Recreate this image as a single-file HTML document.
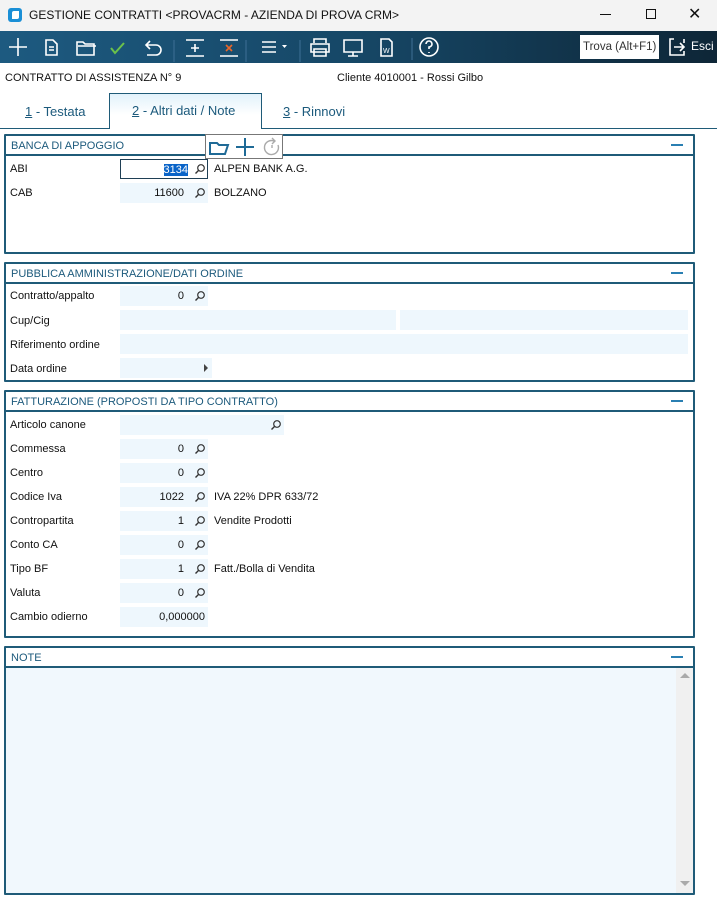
<!DOCTYPE html>
<html><head><meta charset="utf-8"><style>
*{box-sizing:border-box;margin:0;padding:0}
body{width:717px;height:900px;background:#fff;font-family:"Liberation Sans",sans-serif;font-size:11.5px;color:#111;position:relative;overflow:hidden}
.a{position:absolute}
.tb{left:0;top:31px;width:717px;height:32px;background:linear-gradient(90deg,#1d5a80 0%,#164766 50%,#0e2637 100%)}
.panel{position:absolute;left:4px;width:691px;border:2px solid #1f5b78;border-radius:1px}
.ph{height:20px;border-bottom:2px solid #1f5b78;color:#1c5a7c;font-size:11px;padding:4px 0 0 5px}
.min{position:absolute;right:10px;top:8px;width:12px;height:2px;background:#2a7fb2}
.lab{position:absolute;left:10px;font-size:11px}
.f{position:absolute;height:20px;background:#eef7fd;text-align:right;font-size:11px;line-height:20px;padding-right:24px}
.s{position:absolute;right:4px;top:4px}
.d{position:absolute;font-size:11px}
</style></head><body>
<div class="a" style="left:0;top:0;width:717px;height:31px;background:#f3f3f3"></div>
<div class="a" style="left:8px;top:8px;width:14px;height:14px;background:#1a8fd6;border-radius:3px"><div style="position:absolute;left:4px;top:3px;width:7px;height:8px;background:#fff;border-radius:2px 0 2px 0"></div></div>
<div class="a" style="left:29px;top:8px;font-size:12px">GESTIONE CONTRATTI &lt;PROVACRM - AZIENDA DI PROVA CRM&gt;</div>
<div class="a" style="left:600px;top:14px;width:11px;height:1px;background:#111"></div>
<div class="a" style="left:646px;top:9px;width:10px;height:10px;border:1px solid #111"></div>
<div class="a" style="left:688px;top:4px;font-size:16px">✕</div>
<div class="a tb"></div>
<svg class="a" style="left:0;top:31px" width="450" height="32" fill="none" stroke="#fff" stroke-width="1.6">
<path d="M18 7v18M9 16h18"/>
<path d="M46 9h7l4 4v11h-11z M49 16h5M49 19h5"/>
<path d="M77 11h6l2 2h9v11h-17z M78 15h18"/>
<path d="M111 17l4 5 9-10" stroke="#6cc24a" stroke-width="2"/>
<path d="M150 10l-4 4 4 4M146 14h10a5 5 0 0 1 0 10h-9"/>
<path d="M174 9v22M300 9v22M246 9v22" stroke="#3e7096" stroke-width="1"/>
<path d="M186 9h18M186 25h18M195 13v8M191 17h8"/>
<path d="M220 9h18M220 25h18" /><path d="M226 14l6 6M232 14l-6 6" stroke="#e8672a"/>
<path d="M262 11h14M262 16h14M262 21h14"/><path d="M282 14h5l-2.5 3z" fill="#fff" stroke="none"/>
<path d="M314 12v-4h12v4M311 13h18v8h-18zM314 18h12v7h-12z"/>
<path d="M344 9h18v12h-18zM353 21v4M348 25h10"/>
<path d="M381 8h8l3 3v14h-11z"/><text x="383" y="22" font-size="7" fill="#fff" stroke="none" font-family="Liberation Sans">W</text>
<path d="M412 7v22" stroke="#3e7096" stroke-width="1"/>
<circle cx="429" cy="16" r="9"/><path d="M426 13a3 3 0 1 1 3 3v2M429 21v1"/>
</svg>
<div class="a" style="left:580px;top:35px;width:79px;height:24px;background:#fff;font-size:11.5px;line-height:24px;padding-left:3px;color:#333">Trova (Alt+F1)</div>
<svg class="a" style="left:667px;top:36px" width="22" height="22" fill="none" stroke="#fff" stroke-width="1.6"><path d="M7 3h-4v16h14v-4M7 11h10M13 7l4 4-4 4M17 3v4"/></svg>
<div class="a" style="left:691px;top:39px;color:#fff;font-size:12px">Esci</div>
<div class="a" style="left:5px;top:72px;font-size:11px">CONTRATTO DI ASSISTENZA N° 9</div>
<div class="a" style="left:337px;top:72px;font-size:11px">Cliente 4010001 - Rossi Gilbo</div>
<div class="a" style="left:0;top:128px;width:717px;height:1px;background:#1f5b78"></div>
<div class="a" style="left:109px;top:93px;width:153px;height:36px;border:1px solid #1f5b78;border-bottom:none;background:linear-gradient(#e2f2fb,#fff 60%)"></div>
<div class="a" style="left:25px;top:104px;font-size:13px;color:#1c5a7c"><u>1</u> - Testata</div>
<div class="a" style="left:132px;top:103px;font-size:13px;color:#1c5a7c"><u>2</u> - Altri dati / Note</div>
<div class="a" style="left:283px;top:104px;font-size:13px;color:#1c5a7c"><u>3</u> - Rinnovi</div>

<div class="panel" style="top:134px;height:120px"><div class="ph">BANCA DI APPOGGIO</div><div class="min"></div></div>
<div class="a" style="left:205px;top:134px;width:78px;height:25px;border:1px solid #777;background:#fff"></div>
<svg class="a" style="left:206px;top:136px" width="76" height="22" fill="none" stroke="#1f6a96" stroke-width="2"><path d="M4 7h7l2 2h9l-3 9h-15z"/><path d="M39 2v18M30 11h18"/><path d="M68 5a7 7 0 1 0 4 4M66 2l3 3-3 3M66 9v3" stroke="#aaa" stroke-width="1.4"/></svg>
<div class="lab" style="top:163px">ABI</div>
<div class="f" style="left:120px;top:159px;width:88px;background:#fff;border:1px solid #1f3f55;padding-right:19px"><span style="background:#0a64c8;color:#fff">3134</span></div>
<div class="d" style="left:214px;top:163px">ALPEN BANK A.G.</div>
<div class="lab" style="top:187px">CAB</div>
<div class="f" style="left:120px;top:183px;width:88px">11600</div>
<div class="d" style="left:214px;top:187px">BOLZANO</div>

<div class="panel" style="top:262px;height:120px"><div class="ph">PUBBLICA AMMINISTRAZIONE/DATI ORDINE</div><div class="min"></div></div>
<div class="lab" style="top:290px">Contratto/appalto</div><div class="f" style="left:120px;top:286px;width:88px">0</div>
<div class="lab" style="top:315px">Cup/Cig</div><div class="f" style="left:120px;top:310px;width:276px"></div><div class="f" style="left:400px;top:310px;width:288px"></div>
<div class="lab" style="top:339px">Riferimento ordine</div><div class="f" style="left:120px;top:334px;width:568px"></div>
<div class="lab" style="top:363px">Data ordine</div><div class="f" style="left:120px;top:358px;width:92px"><span style="position:absolute;right:4px;top:6px;border-left:4px solid #444;border-top:4px solid transparent;border-bottom:4px solid transparent"></span></div>

<div class="panel" style="top:390px;height:248px"><div class="ph">FATTURAZIONE (PROPOSTI DA TIPO CONTRATTO)</div><div class="min"></div></div>
<div class="lab" style="top:419px">Articolo canone</div><div class="f" style="left:120px;top:415px;width:164px"></div>
<div class="lab" style="top:443px">Commessa</div><div class="f" style="left:120px;top:439px;width:88px">0</div>
<div class="lab" style="top:467px">Centro</div><div class="f" style="left:120px;top:463px;width:88px">0</div>
<div class="lab" style="top:491px">Codice Iva</div><div class="f" style="left:120px;top:487px;width:88px">1022</div><div class="d" style="left:214px;top:491px">IVA 22% DPR 633/72</div>
<div class="lab" style="top:515px">Contropartita</div><div class="f" style="left:120px;top:511px;width:88px">1</div><div class="d" style="left:214px;top:515px">Vendite Prodotti</div>
<div class="lab" style="top:539px">Conto CA</div><div class="f" style="left:120px;top:535px;width:88px">0</div>
<div class="lab" style="top:563px">Tipo BF</div><div class="f" style="left:120px;top:559px;width:88px">1</div><div class="d" style="left:214px;top:563px">Fatt./Bolla di Vendita</div>
<div class="lab" style="top:587px">Valuta</div><div class="f" style="left:120px;top:583px;width:88px">0</div>
<div class="lab" style="top:611px">Cambio odierno</div><div class="f" style="left:120px;top:607px;width:88px;padding-right:3px">0,000000</div>

<div class="panel" style="top:646px;height:249px"><div class="ph">NOTE</div><div class="min"></div></div>
<div class="a" style="left:6px;top:668px;width:670px;height:225px;background:#f1f8fd"></div>
<div class="a" style="left:676px;top:668px;width:17px;height:225px;background:#f0f0f0"></div>
<div class="a" style="left:680px;top:673px;border-bottom:5px solid #aaa;border-left:5px solid transparent;border-right:5px solid transparent"></div>
<div class="a" style="left:680px;top:881px;border-top:5px solid #aaa;border-left:5px solid transparent;border-right:5px solid transparent"></div>

<svg width="0" height="0" style="position:absolute"><defs><g id="m"><circle cx="7" cy="5" r="3.3" fill="none" stroke="#333" stroke-width="1.2"/><path d="M4.6 7.4L1.5 10.5" stroke="#333" stroke-width="1.4"/></g></defs></svg>
<svg class="a" style="left:194px;top:163px" width="12" height="12"><use href="#m"/></svg>
<svg class="a" style="left:194px;top:187px" width="12" height="12"><use href="#m"/></svg>
<svg class="a" style="left:194px;top:290px" width="12" height="12"><use href="#m"/></svg>
<svg class="a" style="left:270px;top:419px" width="12" height="12"><use href="#m"/></svg>
<svg class="a" style="left:194px;top:443px" width="12" height="12"><use href="#m"/></svg>
<svg class="a" style="left:194px;top:467px" width="12" height="12"><use href="#m"/></svg>
<svg class="a" style="left:194px;top:491px" width="12" height="12"><use href="#m"/></svg>
<svg class="a" style="left:194px;top:515px" width="12" height="12"><use href="#m"/></svg>
<svg class="a" style="left:194px;top:539px" width="12" height="12"><use href="#m"/></svg>
<svg class="a" style="left:194px;top:563px" width="12" height="12"><use href="#m"/></svg>
<svg class="a" style="left:194px;top:587px" width="12" height="12"><use href="#m"/></svg>
</body></html>
